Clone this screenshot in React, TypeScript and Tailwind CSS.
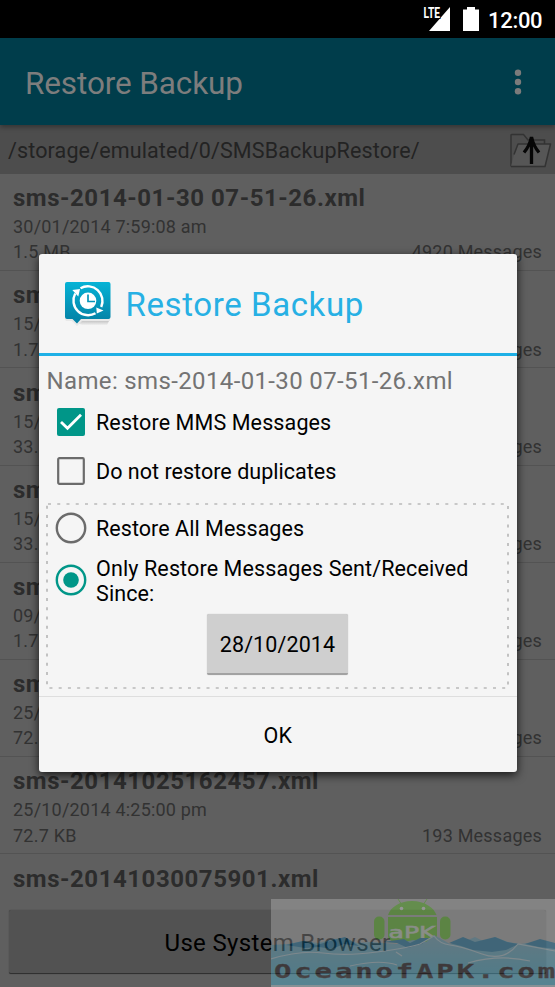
import React from "react";

type Backup = { name: string; date?: string; size?: string; count?: string };

const backups: Backup[] = [
  { name: "sms-2014-01-30 07-51-26.xml", date: "30/01/2014 7:59:08 am", size: "1.5 MB", count: "4920 Messages" },
  { name: "sms-20141015075901.xml", date: "15/10/2014 7:59:01 am", size: "1.7 MB", count: "4920 Messages" },
  { name: "sms-20141015162457.xml", date: "15/10/2014 4:25:00 pm", size: "33.7 KB", count: "93 Messages" },
  { name: "sms-20141015182457.xml", date: "15/10/2014 6:25:00 pm", size: "33.7 KB", count: "93 Messages" },
  { name: "sms-20141009075901.xml", date: "09/10/2014 7:59:01 am", size: "1.7 MB", count: "4920 Messages" },
  { name: "sms-20141025075901.xml", date: "25/10/2014 7:59:01 am", size: "72.7 KB", count: "193 Messages" },
  { name: "sms-20141025162457.xml", date: "25/10/2014 4:25:00 pm", size: "72.7 KB", count: "193 Messages" },
  { name: "sms-20141030075901.xml" },
];

function StatusBar() {
  return (
    <div className="flex h-[38px] shrink-0 items-center justify-end bg-black pr-[13px] text-white">
      <svg className="mr-[12px] h-[38px] w-[28px]" viewBox="423 0 28 38">
        <path d="M450 7V31H429Z" fill="#fff" />
        <text x="423.5" y="18" fill="#fff" stroke="#000" strokeWidth="2" paintOrder="stroke" fontFamily="Roboto, sans-serif" fontWeight="700" fontSize="15" textLength="16.5" lengthAdjust="spacingAndGlyphs">LTE</text>
      </svg>
      <svg className="mr-[8px] h-[38px] w-[17px]" viewBox="463 0 17 38">
        <path d="M463 9.5h4V7h8v2.500h4V31h-16z" fill="#fff" />
      </svg>
      <span className="mt-[3px] w-[54px] text-[22px] leading-[30px] font-medium tracking-[-0.3px]">12:00</span>
    </div>
  );
}

function Row({ b }: { b: Backup }) {
  return (
    <div className="h-[97.200px] shrink-0 border-b border-[#535353] pt-[9.200px] pr-[13px] pl-[13px]">
      <div className="h-[31px] text-[24px] leading-[30.600px] font-bold tracking-[0.540px] whitespace-nowrap text-[#2c2c2c]">{b.name}</div>
      {b.date && (
        <>
          <div className="text-[18px] leading-[25.3px] tracking-[0.2px] text-[#323232]">{b.date}</div>
          <div className="flex justify-between text-[18px] leading-[25.3px] tracking-[0.22px] text-[#323232]">
            <span>{b.size}</span>
            <span>{b.count}</span>
          </div>
        </>
      )}
    </div>
  );
}

function AppIcon() {
  return (
    <svg className="mt-[3px] h-[48px] w-[48px]" viewBox="0 0 48 48">
      <defs>
        <linearGradient id="tile" x1="0" y1="0" x2="0" y2="1">
          <stop offset="0" stopColor="#06b3d6" />
          <stop offset="1" stopColor="#047fa3" />
        </linearGradient>
        <linearGradient id="shade" x1="0" y1="0" x2="0" y2="1">
          <stop offset="0" stopColor="#b0b0b0" />
          <stop offset="1" stopColor="#f0f0f0" />
        </linearGradient>
      </defs>
      <path d="M3 38H46L43 44H18Z" fill="url(#shade)" />
      <path d="M1 38H46V40H18L13 45L8 40H2Z" fill="#e8e8e8" />
      <path d="M3 1H44.500Q46.500 1 46.500 3V36Q46.500 38 44.500 38H17L13 42.500L8.500 38H3Q1 38 1 36V3Q1 1 3 1Z" fill="url(#tile)" />
      <g fill="none" stroke="#fff" strokeWidth="2.400">
        <path d="M16.500 7.200A14.700 14.700 0 0 1 37.200 26" />
        <path d="M31.500 32.200A14.700 14.700 0 0 1 11.200 12.500" />
      </g>
      <path d="M8.300 9L16 8L14.300 15.500Z M32.300 26.500L39.500 29.500L32.800 32.500Z" fill="#fff" />
      <circle cx="24" cy="19.800" r="8.300" fill="#fff" />
      <path d="M24 13.500V20.500H31" fill="none" stroke="#0795b8" strokeWidth="1.700" />
    </svg>
  );
}

function Checkbox({ checked }: { checked?: boolean }) {
  return (
    <svg className="h-[28px] w-[28px] shrink-0" viewBox="0 0 28 28">
      {checked ? (
        <>
          <rect width="28" height="28" rx="2" fill="#009688" />
          <path d="M4 14L10.500 20.300L24 6.700" fill="none" stroke="#fff" strokeWidth="2.800" />
        </>
      ) : (
        <rect x="1.200" y="1.200" width="25.600" height="25.600" rx="1.200" fill="none" stroke="#6b6b6b" strokeWidth="2.200" />
      )}
    </svg>
  );
}

function Radio({ checked }: { checked?: boolean }) {
  return (
    <svg className="h-[32px] w-[32px] shrink-0" viewBox="0 0 32 32">
      <circle cx="16" cy="16" r="14.200" fill="none" stroke={checked ? "#009688" : "#6b6b6b"} strokeWidth="2.400" />
      {checked && <circle cx="16" cy="16" r="7.800" fill="#009688" />}
    </svg>
  );
}

function Dialog() {
  return (
    <div className="absolute top-[254px] left-[38.500px] flex h-[517.500px] w-[478.500px] flex-col rounded-[3px] bg-[#f5f5f5] text-black shadow-[0_3px_10px_rgba(0,0,0,0.75)]">
      <div className="flex h-[102px] shrink-0 items-center border-b-[3px] border-[#1eb0e6] pl-[25px]">
        <AppIcon />
        <span className="ml-[14px] pt-[2px] text-[33px] leading-[40px] tracking-[0.6px] whitespace-nowrap text-[#27b0e4]">Restore Backup</span>
      </div>
      <div className="mt-[9px] h-[32px] pl-[8px] text-[24px] leading-[32px] tracking-[0.36px] whitespace-nowrap text-[#737373]">Name: sms-2014-01-30 07-51-26.xml</div>
      <div className="mt-[10.500px] flex h-[28px] items-center gap-[11px] pl-[18.500px] text-[21.500px]">
        <Checkbox checked />
        <span className="pt-[3px] leading-[26px] tracking-[0.12px] whitespace-nowrap">Restore MMS Messages</span>
      </div>
      <div className="mt-[21.500px] flex h-[28px] items-center gap-[11px] pl-[18.500px] text-[21.500px]">
        <Checkbox />
        <span className="pt-px leading-[26px] tracking-[0.03px] whitespace-nowrap">Do not restore duplicates</span>
      </div>
      <div className="relative mt-[18px] ml-[7.500px] h-[186px] w-[463px] shrink-0">
        <svg className="absolute inset-0 h-full w-full" viewBox="0 0 463 186">
          <rect x="1" y="1" width="461" height="184" fill="none" stroke="#b9b9b9" strokeWidth="1.700" strokeDasharray="3 6.240" strokeDashoffset="-1" />
        </svg>
        <div className="flex h-[50px] items-center gap-[9px] pl-[9px] text-[21.500px]">
          <Radio />
          <span className="pt-px leading-[26px] tracking-[0.05px] whitespace-nowrap">Restore All Messages</span>
        </div>
        <div className="flex h-[54px] items-center gap-[9px] pl-[9px] text-[21.500px] leading-[25.300px] tracking-[0.12px]">
          <Radio checked />
          <span className="pt-[2px] whitespace-nowrap">
            Only Restore Messages Sent/Received
            <br />
            Since:
          </span>
        </div>
        <button className="mt-[7px] ml-[161px] block h-[61px] w-[141px] rounded-[2px] border-b-2 border-[#a2a2a2] bg-[#cfcfcf] pt-[4px] text-[21.500px] tracking-[0.1px] shadow-[0_0_1px_rgba(0,0,0,0.3)]">28/10/2014</button>
      </div>
      <div className="mt-[7px] flex flex-1 items-center justify-center border-t-[1.500px] border-[#dedede] pt-[4px] text-[21.500px]">OK</div>
    </div>
  );
}

function Watermark() {
  return (
    <svg className="absolute top-[899px] left-[271px] h-[88px] w-[284px] opacity-[0.34]" viewBox="271 899 284 88">
      <defs>
        <linearGradient id="sea" x1="0" y1="0" x2="0" y2="1">
          <stop offset="0" stopColor="#83c3de" />
          <stop offset="1" stopColor="#43cdf5" />
        </linearGradient>
      </defs>
      <rect x="271" y="899" width="284" height="88" fill="#cacaca" />
      <g fill="#70e62c">
        <path d="M388 915c2-7 11-14 24-14s22 7 24.500 14z" />
        <path d="M388 917h49v20q-2 5-10 6h-29q-8-1-10-6z" />
        <rect x="374" y="916.500" width="10.500" height="23" rx="5" />
        <rect x="440" y="916.500" width="10.500" height="23" rx="5" />
        <path d="M398 899l4 6M427 899l-4 6" stroke="#70e62c" />
      </g>
      <circle cx="401.500" cy="908.500" r="1.800" fill="#fff" />
      <circle cx="423.500" cy="908.500" r="1.800" fill="#fff" />
      <text x="388.500" y="938" fill="#f4fff0" fontFamily="'DejaVu Sans', sans-serif" fontWeight="400" stroke="#f4fff0" strokeWidth="0.500" fontSize="15.500" textLength="47" lengthAdjust="spacingAndGlyphs">aPK</text>
      <path d="M271 945L288 944L303 941L318 943L333 939L345 938L357 943L370 942L384 943L397 944L413 940L426 942L434 935L450 944L463 942L475 937L487 943L495 937L508 942L520 944L535 942L555 943V987H271Z" fill="url(#sea)" />
      <g fill="#208cc2">
        <path d="M286 945L303 941L317 945L333 940L345 937L359 946L344 944L332 949L319 947L305 948Z" />
        <path d="M383 942L404 939L410 943L420 938L429 938L422 944L408 948L397 943Z" />
        <path d="M449 943L463 937L475 942L495 937L507 942L519 944L506 950L492 952L473 950L461 946Z" />
        <path d="M525 944L540 939L555 943V949L539 947Z" />
      </g>
      <g fill="none" stroke="#d3f1fd" strokeWidth="1.200">
        <path d="M271 959Q300 950 323 953T377 952T420 944L434 936Q440 944 450 945T482 954T518 944L555 951" />
        <path d="M350 966Q380 959 397 965M396 952L402 956M468 963Q500 954 530 961" />
        <path d="M271 986H555" strokeWidth="2" />
      </g>
      <text transform="translate(274 978) scale(1.450 1)" fill="#180c10" stroke="#180c10" strokeWidth="0.300" fontFamily="'DejaVu Sans Mono', monospace" fontWeight="700" fontSize="20" textLength="194" lengthAdjust="spacing">OceanofAPK.com</text>
    </svg>
  );
}

export default function App() {
  return (
    <div className="relative flex h-[987px] w-[555px] flex-col overflow-hidden bg-[#5f5f5f] font-['Roboto',sans-serif]">
      <StatusBar />
      <header className="z-10 flex h-[87px] shrink-0 items-center justify-between bg-[#003d4b] pr-[33px] pl-[25px] shadow-[0_2px_5px_rgba(0,0,0,0.35)]">
        <h1 className="pt-[4px] text-[31.500px] tracking-[-0.12px] whitespace-nowrap text-[#7d7d7d]">Restore Backup</h1>
        <svg className="h-[26px] w-[8px]" viewBox="0 0 8 26" fill="#7b7b7b">
          <circle cx="4" cy="3.700" r="3.200" />
          <circle cx="4" cy="13" r="3.200" />
          <circle cx="4" cy="22.300" r="3.200" />
        </svg>
      </header>
      <div className="flex h-[49px] shrink-0 items-center justify-between bg-[#4d4d4d] pr-[2px] pl-[8px]">
        <span className="pt-[4px] text-[21.500px] tracking-[0.13px] whitespace-nowrap text-[#232323]">/storage/emulated/0/SMSBackupRestore/</span>
        <svg className="h-[36px] w-[43px]" viewBox="0 0 43 36" fill="none">
          <path d="M1 34.500V3Q1 2.500 2 2.500H13.500L18 8H34.500V12" stroke="#333" strokeWidth="1.500" />
          <path d="M1 34.500H35L40.500 12H8L4 22.500" stroke="#333" strokeWidth="1.500" fill="#565656" strokeLinejoin="round" />
          <path d="M21.500 32V5M14 20.500Q19.500 14 21.500 5Q23.500 14 29 20.500" stroke="#060606" strokeWidth="3.300" />
        </svg>
      </div>
      <main className="flex h-[727px] shrink-0 flex-col overflow-hidden">
        {backups.map((b) => (
          <Row key={b.name} b={b} />
        ))}
      </main>
      <footer className="flex flex-1 px-[9px] pt-[9px] pb-[13px]">
        <button className="flex-1 rounded-[2px] border-b border-[#303030] bg-[#525252] pt-[2px] text-[24px] tracking-[0.33px] text-black shadow-[0_0_1px_rgba(0,0,0,0.5)]">Use System Browser</button>
      </footer>
      <Watermark />
      <Dialog />
    </div>
  );
}
